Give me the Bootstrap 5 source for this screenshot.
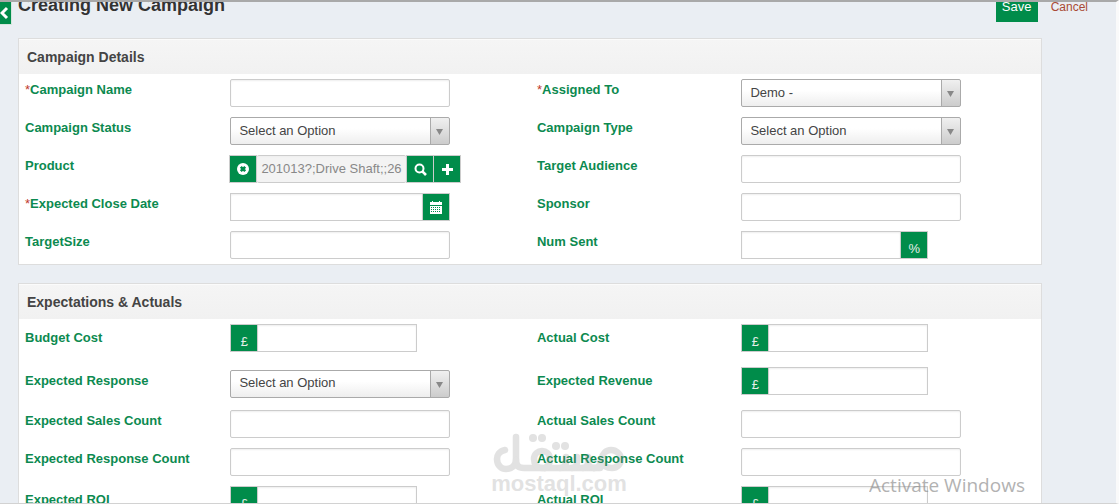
<!DOCTYPE html>
<html lang="en">
<head>
<meta charset="utf-8">
<meta name="viewport" content="width=device-width, initial-scale=1">
<title>Creating New Campaign</title>
<link href="https://cdn.jsdelivr.net/npm/bootstrap@5.3.0/dist/css/bootstrap.min.css" rel="stylesheet">
<style>
:root { --brand: #008c4a; --edge: #ccc; }
body { font-family: "Liberation Sans", Arial, sans-serif; font-size: 13px; line-height: 20px; color: #444; background: #eaeef3; }
.page { border-top: 2px solid #a9a9a9; border-bottom: 1px solid #d2d2d2; border-right: 3px solid #fafafa; padding-left: 18px; padding-right: 74px; }
.top-bar { height: 36px; margin-right: -48px; padding-bottom: 16px; }
.page-title { font-size: 18px; line-height: 20px; font-weight: bold; color: #333; margin: 0 0 7px; }
.save-btn { height: 30px; width: 42px; padding: 0; border: 0; border-radius: 0; font-size: 13px; line-height: 20px; }
.save-btn, .icon-btn { background: var(--brand); color: #fff; }
.save-btn:hover, .icon-btn:hover { background: #00753e; color: #fff; }
.cancel-link { color: #a94a35; font-size: 12px; margin: 0 2px 5px 13px; }
.side-toggle { width: 12px; height: 23px; background: var(--brand); border: 1px solid #d6e6dd; border-width: 0 1px 1px 0; }
.panel { border: 1px solid #ddd; background: #fff; margin-bottom: 18px; }
.panel-title { font-size: 14px; line-height: 20px; font-weight: bold; color: #444; margin: 0; padding: 7px 8px; border-top: 1px solid #fbfbfb; background: linear-gradient(#f5f5f5, #f1f1f1); }
.name-cell { width: 20%; padding: 6px 6px 4px; color: #0c8a50; font-weight: bold; }
.name-cell.second { padding-left: 7px; }
.field-cell { width: 30%; padding: 5px 7px; }
.line { min-height: 38px; }
.line-money { min-height: 43px; }
.line-money .name-cell { padding-top: 9px; }
.req { color: #c0392b; font-weight: normal; }
.box, .pick { height: 28px; width: 100%; max-width: 220px; font-size: 13px; line-height: 20px; border: 1px solid var(--edge); border-radius: 2px; padding: 2px 4px 4px; background: #fff; box-shadow: inset 0 1px 2px #eee; color: #444; }
.pick { display: block; appearance: none; padding: 0 28px 1px 8px; border-color: #aaa; box-shadow: none; background:
  url("data:image/svg+xml,%3Csvg xmlns='http://www.w3.org/2000/svg' width='7' height='6'%3E%3Cpath d='M0 0H7L3.5 6Z' fill='%23888'/%3E%3C/svg%3E") no-repeat right 6px top 11px,
  linear-gradient(#aaa, #aaa) no-repeat right 18px top / 1px 100%,
  linear-gradient(#f0f0f0, #ccc) no-repeat right / 18px 100%,
  linear-gradient(#fff 40%, #eee); }
.group { max-width: 220px; }
.group .box { min-width: 0; flex: 1 1 0; border-radius: 0; }
.group-wide { width: 232px; margin-left: -1px; }
.group-money { max-width: 187px; }
.icon-btn { width: 28px; height: 28px; flex: none; padding: 0; border: 1px solid var(--edge); display: flex; align-items: center; justify-content: center; }
.icon-btn + .icon-btn, .icon-btn.after { margin-left: -1px; }
.group .box.after { margin-left: -1px; }
.unit { width: 28px; height: 28px; flex: none; background: var(--brand); border: 1px solid var(--edge); color: #e6eee9; text-align: center; padding-top: 7px; }
.unit.after { margin-left: -1px; }
.box.filled { background: #f3f3f3; color: #888; }
.site-mark { position: absolute; left: 493px; bottom: 10px; width: 132px; color: #888; opacity: .24; pointer-events: none; text-align: center; font-weight: bold; }
.site-mark svg { display: block; }
.site-url { font-size: 22px; line-height: 18px; white-space: nowrap; display: flex; justify-content: center; }
.os-note { position: absolute; left: 869px; bottom: -17px; color: #8a8a8a; opacity: .65; pointer-events: none; font-family: "Open Sans", sans-serif; white-space: nowrap; }
.os-note-title { font-size: 19px; line-height: 26px; }
.os-note-text { font-size: 14px; line-height: 22px; }
</style>
</head>
<body>
<div class="page vh-100 overflow-hidden position-relative">
  <button class="side-toggle position-absolute top-0 start-0 p-0" type="button" aria-label="Toggle sidebar">
    <svg class="d-block" width="10" height="16" viewBox="0 0 10 16"><path d="M7 3 2 8l5 5" fill="none" stroke="#fff" stroke-width="3"/></svg>
  </button>
  <form>
    <header class="top-bar d-flex align-items-end">
      <h1 class="page-title me-auto">Creating New Campaign</h1>
      <button class="btn save-btn" type="submit">Save</button>
      <a class="cancel-link text-decoration-none" href="#">Cancel</a>
    </header>

    <section class="panel">
      <h2 class="panel-title">Campaign Details</h2>
      <div class="line d-flex">
        <label class="name-cell" for="cname"><span class="req">*</span>Campaign Name</label>
        <div class="field-cell"><input class="box d-block" id="cname" type="text"></div>
        <label class="name-cell second" for="assigned"><span class="req">*</span>Assigned To</label>
        <div class="field-cell"><select class="pick" id="assigned"><option>Demo -</option></select></div>
      </div>
      <div class="line d-flex">
        <label class="name-cell" for="cstatus">Campaign Status</label>
        <div class="field-cell"><select class="pick" id="cstatus"><option>Select an Option</option></select></div>
        <label class="name-cell second" for="ctype">Campaign Type</label>
        <div class="field-cell"><select class="pick" id="ctype"><option>Select an Option</option></select></div>
      </div>
      <div class="line d-flex">
        <label class="name-cell" for="product">Product</label>
        <div class="field-cell"><div class="group-wide d-flex">
          <button class="icon-btn" type="button" aria-label="Clear product"><svg width="12" height="12" viewBox="0 0 12 12"><circle cx="6" cy="6" r="6" fill="#fff"/><path d="M3.8 3.8l4.4 4.4M8.2 3.8 3.8 8.2" stroke="#008c4a" stroke-width="2.6"/></svg></button>
          <input class="box filled flex-fill border-start-0 border-end-0" id="product" type="text" value="201013?;Drive Shaft;;26" readonly>
          <button class="icon-btn" type="button" aria-label="Search product"><svg width="13" height="13" viewBox="0 0 13 13"><circle cx="5.5" cy="5.5" r="4" fill="none" stroke="#fff" stroke-width="2"/><path d="M8.3 8.3 12 12" stroke="#fff" stroke-width="2.6"/></svg></button>
          <button class="icon-btn" type="button" aria-label="Add product"><svg width="11" height="11" viewBox="0 0 11 11"><path d="M5.5 0v11M0 5.5h11" stroke="#fff" stroke-width="3"/></svg></button>
        </div></div>
        <label class="name-cell second" for="audience">Target Audience</label>
        <div class="field-cell"><input class="box d-block" id="audience" type="text"></div>
      </div>
      <div class="line d-flex">
        <label class="name-cell" for="closedate"><span class="req">*</span>Expected Close Date</label>
        <div class="field-cell"><div class="group d-flex">
          <input class="box" id="closedate" type="text">
          <button class="icon-btn after" type="button" aria-label="Pick a date"><svg width="12" height="13" viewBox="0 0 12 13" shape-rendering="crispEdges"><path d="M0 1h2V0h1v1h6V0h1v1h2v3H0zM0 5h12v8H0z" fill="#fff"/><path d="M1 6.5h10M1 8.5h10M1 10.5h10" stroke="#008c4a" stroke-dasharray="1 1"/></svg></button>
        </div></div>
        <label class="name-cell second" for="sponsor">Sponsor</label>
        <div class="field-cell"><input class="box d-block" id="sponsor" type="text"></div>
      </div>
      <div class="line d-flex">
        <label class="name-cell" for="tsize">TargetSize</label>
        <div class="field-cell"><input class="box d-block" id="tsize" type="text"></div>
        <label class="name-cell second" for="numsent">Num Sent</label>
        <div class="field-cell"><div class="group group-money d-flex">
          <input class="box" id="numsent" type="text"><span class="unit after">%</span>
        </div></div>
      </div>
    </section>

    <section class="panel">
      <h2 class="panel-title">Expectations &amp; Actuals</h2>
      <div class="line line-money d-flex">
        <label class="name-cell" for="budget">Budget Cost</label>
        <div class="field-cell"><div class="group group-money d-flex"><span class="unit">£</span><input class="box after" id="budget" type="text"></div></div>
        <label class="name-cell second" for="acost">Actual Cost</label>
        <div class="field-cell"><div class="group group-money d-flex"><span class="unit">£</span><input class="box after" id="acost" type="text"></div></div>
      </div>
      <div class="line line-money d-flex">
        <label class="name-cell" for="eresp">Expected Response</label>
        <div class="field-cell align-self-center"><select class="pick" id="eresp"><option>Select an Option</option></select></div>
        <label class="name-cell second" for="erev">Expected Revenue</label>
        <div class="field-cell"><div class="group group-money d-flex"><span class="unit">£</span><input class="box after" id="erev" type="text"></div></div>
      </div>
      <div class="line d-flex">
        <label class="name-cell" for="esales">Expected Sales Count</label>
        <div class="field-cell"><input class="box d-block" id="esales" type="text"></div>
        <label class="name-cell second" for="asales">Actual Sales Count</label>
        <div class="field-cell"><input class="box d-block" id="asales" type="text"></div>
      </div>
      <div class="line d-flex">
        <label class="name-cell" for="ercount">Expected Response Count</label>
        <div class="field-cell"><input class="box d-block" id="ercount" type="text"></div>
        <label class="name-cell second" for="arcount">Actual Response Count</label>
        <div class="field-cell"><input class="box d-block" id="arcount" type="text"></div>
      </div>
      <div class="line line-money d-flex">
        <label class="name-cell" for="eroi">Expected ROI</label>
        <div class="field-cell"><div class="group group-money d-flex"><span class="unit">£</span><input class="box after" id="eroi" type="text"></div></div>
        <label class="name-cell second" for="aroi">Actual ROI</label>
        <div class="field-cell"><div class="group group-money d-flex"><span class="unit">£</span><input class="box after" id="aroi" type="text"></div></div>
      </div>
    </section>
  </form>

  <div class="site-mark">
    <svg width="132" height="42" viewBox="0 0 132 42" role="img" aria-label="مستقل">
      <g fill="none" stroke="currentColor" stroke-width="6.5" stroke-linecap="round" stroke-linejoin="round">
        <path d="M12 17C6 18 4 23 4 26c0 7 5 10 9 10 6 0 10-4 10-9V4"/>
        <path d="M23 27c0 6 3 8 8 8h76"/>
        <path d="M52 35c4-2 5-5 5-9 0-5-4-8-8-8s-8 3-8 8 3 9 8 9"/>
        <path d="M73 24v5c0 4-2 6-6 6M84 24v5c0 4-2 6-5 6M95 24v5c0 4-2 6-5 6M95 29c0 4 2 6 6 6"/>
        <path d="M101 35c6 0 6-4 7-8 1-6 5-10 10-10s10 4 10 9-4 9-9 9c-6 0-9-3-12-6"/>
      </g>
      <g fill="currentColor"><circle cx="40" cy="5" r="4"/><circle cx="49" cy="5" r="4"/><circle cx="63" cy="13" r="4"/><circle cx="72" cy="13" r="4"/></g>
    </svg>
    <div class="site-url">mostaql.com</div>
  </div>
  <div class="os-note">
    <div class="os-note-title">Activate Windows</div>
    <div class="os-note-text">Go to Settings to activate Windows.</div>
  </div>
</div>
<script src="https://cdn.jsdelivr.net/npm/bootstrap@5.3.0/dist/js/bootstrap.bundle.min.js"></script>
</body>
</html>
